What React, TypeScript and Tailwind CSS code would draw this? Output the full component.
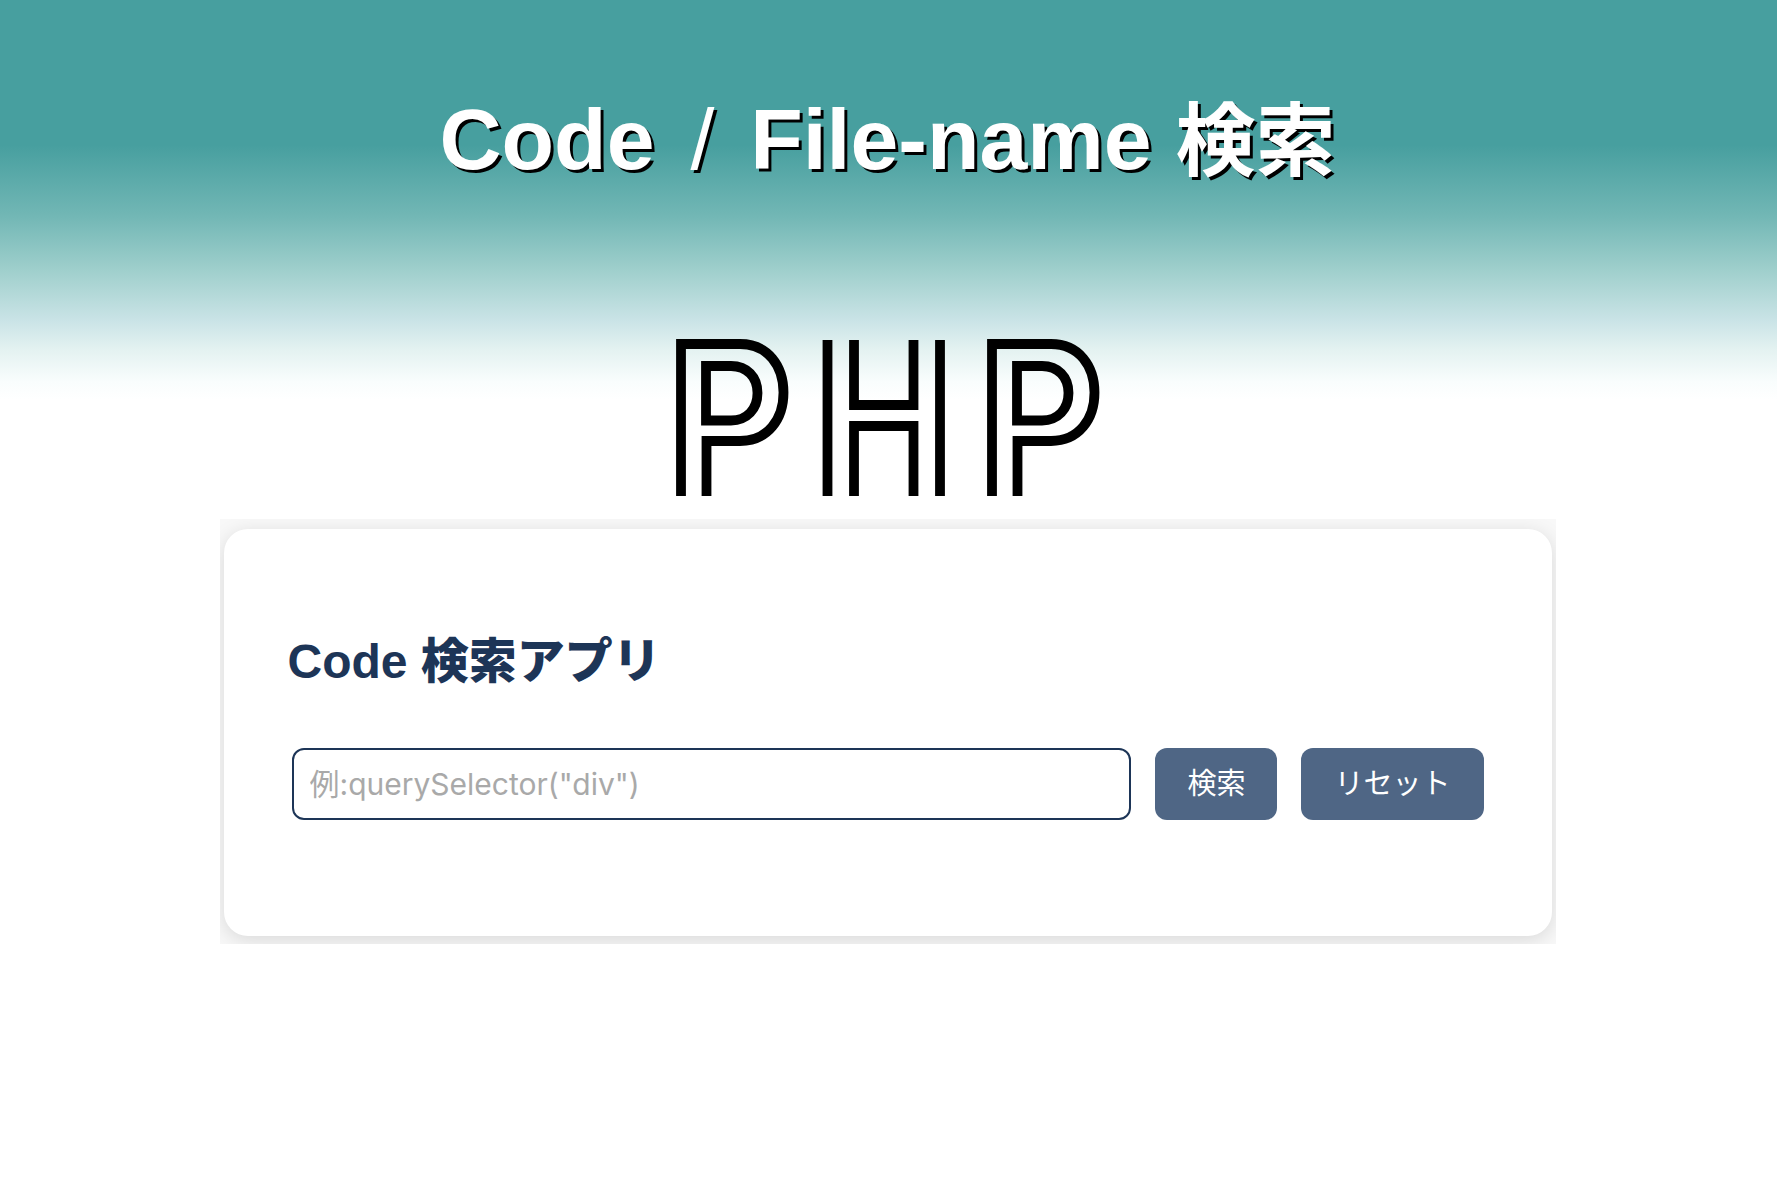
import React from "react";

function LetterP({ x }: { x: number }) {
  return (
    <g transform={`translate(${x} 0)`}>
      <path d="M5 158V6H64C92 6 107.500 28 107.500 54.500S92 103 64 103H30.500V158" />
      <path d="M30 28H55C71 28 81.500 39 81.500 55S71 82.500 55 82.500H30Z" />
    </g>
  );
}

function PhpLogo() {
  return (
    <svg
      role="img"
      aria-label="PHP"
      viewBox="0 0 424 158"
      className="mx-auto block h-[158px] w-[424px]"
      fill="none"
      stroke="#000"
      strokeWidth="9.800"
    >
      <LetterP x={0} />
      <path d="M151.500 2V158M264 2V158M178 2V67H237.500V2M178 158V88H237.500V158" />
      <LetterP x={311} />
    </svg>
  );
}

export default function App() {
  return (
    <main
      lang="ja"
      className="min-h-screen bg-white bg-[linear-gradient(180deg,#479f9f_0px,#479f9f_145px,#72b7b5_216px,#9fcfcc_270px,#cbe4e7_322px,#e4f2f1_350px,#f9fdfd_382px,#ffffff_400px)] pt-[83px] pr-8 pb-16 pl-[30px]"
    >
      <h1 className="text-center font-['Liberation_Sans','Noto_Sans_CJK_JP',sans-serif] text-[86px] leading-[112px] font-bold whitespace-nowrap text-white [text-shadow:3px_3px_0_#000]">
        Code <span className="mx-3 font-normal">/</span> File-name <span className="text-[80px]">検索</span>
      </h1>

      <div className="mt-[140px]">
        <PhpLogo />
      </div>

      <section className="mx-auto mt-[23px] w-full max-w-[1336px] overflow-hidden bg-[#f8f8f8] px-1 pt-[10px] pb-2">
        <div className="rounded-3xl bg-white px-16 pt-[101px] pb-[116px] shadow-[0_4px_20px_rgba(0,0,0,0.13)]">
          <h2 className="font-['Liberation_Sans','Noto_Sans_CJK_JP',sans-serif] text-5xl leading-[64px] font-bold text-[#1d3557]">
            Code <span className="font-black">検索アプリ</span>
          </h2>
          <form
            className="mt-[54px] flex gap-6 px-1 font-['Inter','Noto_Sans_CJK_JP',sans-serif]"
            onSubmit={(e) => e.preventDefault()}
          >
            <input
              type="text"
              aria-label="検索するコード"
              placeholder={'例:querySelector("div")'}
              className="h-[72px] min-w-0 flex-1 rounded-xl border-2 border-[#1d3557] bg-white px-4 text-[30px] text-[#1d3557] placeholder:text-[#a9a9a9]"
            />
            <button type="submit" className="h-[72px] rounded-xl bg-[#4f6685] px-8 text-[29px] text-white">
              検索
            </button>
            <button type="reset" className="h-[72px] rounded-xl bg-[#4f6685] px-[33px] text-[29px] text-white">
              リセット
            </button>
          </form>
        </div>
      </section>
    </main>
  );
}
